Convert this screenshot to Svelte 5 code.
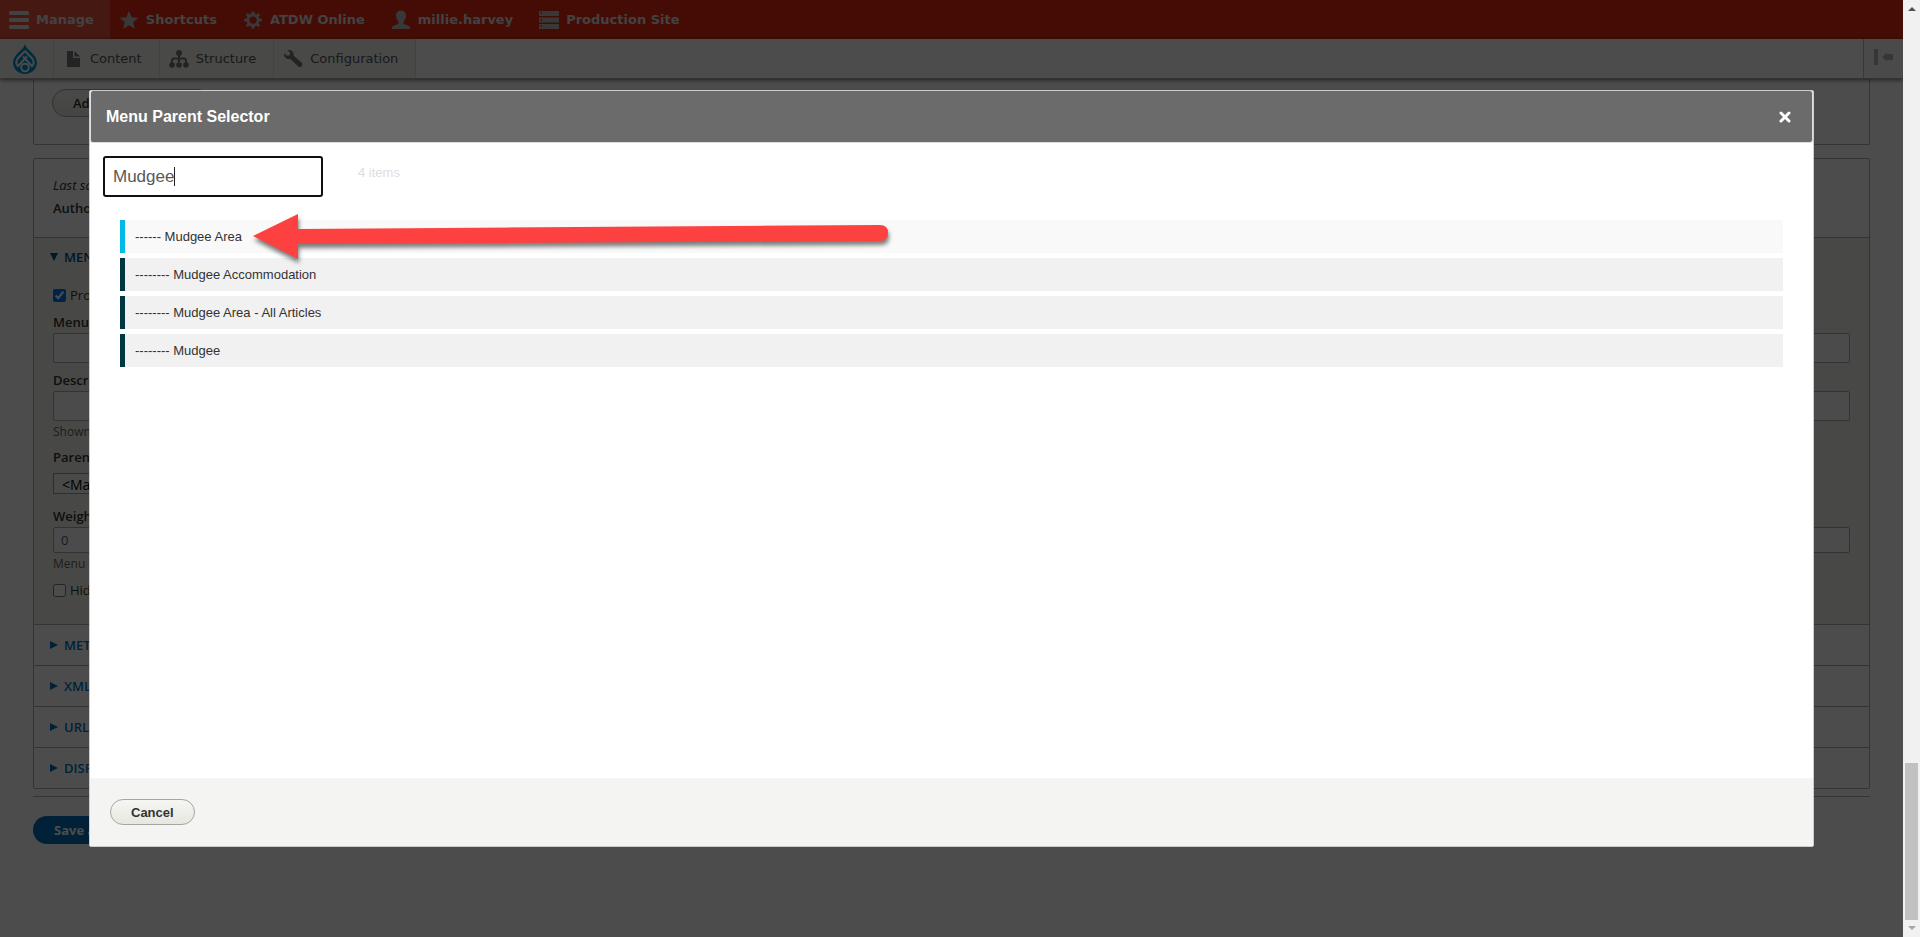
<script lang="ts">
  type Icon = 'menu' | 'star' | 'gear' | 'user' | 'server' | 'file' | 'tree' | 'wrench';

  const barItems: { label: string; icon: Icon }[] = [
    { label: 'Manage', icon: 'menu' },
    { label: 'Shortcuts', icon: 'star' },
    { label: 'ATDW Online', icon: 'gear' },
    { label: 'millie.harvey', icon: 'user' },
    { label: 'Production Site', icon: 'server' },
  ];

  const trayItems: { label: string; icon: Icon }[] = [
    { label: 'Content', icon: 'file' },
    { label: 'Structure', icon: 'tree' },
    { label: 'Configuration', icon: 'wrench' },
  ];

  const sections = ['META TAGS', 'XML SITEMAP', 'URL ALIAS', 'DISPLAY SETTINGS'];

  const parents = [
    { depth: 6, title: 'Mudgee Area' },
    { depth: 8, title: 'Mudgee Accommodation' },
    { depth: 8, title: 'Mudgee Area - All Articles' },
    { depth: 8, title: 'Mudgee' },
  ];

  let search = $state('Mudgee');
  let selected = $state(0);
  let provideLink = $state(true);

  const matches = $derived(
    parents.filter((p) => p.title.toLowerCase().includes(search.toLowerCase()))
  );
</script>

{#snippet icon(name: Icon)}
  <svg class="icon" viewBox="0 0 20 20" width="20" height="20" aria-hidden="true">
    {#if name === 'menu'}
      <rect x="0" y="1" width="20" height="4" rx="1.5" />
      <rect x="0" y="8" width="20" height="4" rx="1.5" />
      <rect x="0" y="15" width="20" height="4" rx="1.5" />
    {:else if name === 'star'}
      <path d="M10 .8l2.600 6.500 6.900.4-5.300 4.500 1.700 6.800L10 15.300 4.100 19l1.700-6.800L.5 7.700l6.900-.4z" />
    {:else if name === 'gear'}
      <path
        fill-rule="evenodd"
        d="M8.700 1.500h2.600l.4 2.300 1.700.7 2-1.400 1.700 1.700-1.400 2 .7 1.700 2.600.4v2.400l-2.600.4-.7 1.700 1.400 2-1.700 1.700-2-1.400-1.700.7-.4 2.300H8.700l-.4-2.300-1.700-.7-2 1.400-1.700-1.700 1.400-2-.7-1.700L1 11.300V8.900l2.600-.4.7-1.700-1.400-2 1.700-1.700 2 1.400 1.700-.7zM10 6.400a3.700 3.700 0 1 0 0 7.400 3.700 3.700 0 0 0 0-7.400z"
      />
    {:else if name === 'user'}
      <path d="M10 .5c3 0 5 2 5 5 0 2.300-.9 4.500-2.300 5.800v2.200c.3 1.400 6.300 1.700 6.300 4.300V19H1v-1.200c0-2.600 6-2.900 6.300-4.300v-2.200C5.900 10 5 7.800 5 5.500c0-3 2-5 5-5z" />
    {:else if name === 'server'}
      <path
        fill-rule="evenodd"
        d="M0 1h20v5H0zM0 7.500h20v5H0zM0 14h20v5H0zM1.500 2v1.500H3V2zM1.500 9.500V11H3V9.500zM1.500 15v1.500H3V15z"
      />
    {:else if name === 'file'}
      <path d="M4 2h6v7h7v9H4zM11.500 2L17 7.600h-5.500z" />
    {:else if name === 'tree'}
      <path d="M10 5v8M3 15v-3.500q0-2 2-2h10q2 0 2 2V15" fill="none" stroke="currentColor" stroke-width="2" />
      <circle cx="10" cy="4" r="3" />
      <circle cx="3" cy="16" r="2.800" />
      <circle cx="10" cy="16" r="2.800" />
      <circle cx="17" cy="16" r="2.800" />
    {:else if name === 'wrench'}
      <path d="M4.500 1.200C8 .2 11.300 3 10.600 6.500l8 7.300c2.200 2.300-1 5.500-3.300 3.600L7.300 9.900C4 10.800.6 8 1 4.300l3 2.500 2.600-.6.500-2.500z" />
    {/if}
  </svg>
{/snippet}

<div class="screen">
  <div class="page">
    <nav class="bar" aria-label="Administration toolbar">
      {#each barItems as item, i}
        <a href="#{item.icon}" class="bar-item" class:active={i === 0}>
          <span class="icon-box">{@render icon(item.icon)}</span>{item.label}
        </a>
      {/each}
    </nav>

    <nav class="tray" aria-label="Administration menu">
      <a href="#home" class="home" aria-label="Home">
        <svg viewBox="0 0 24 30" width="24" height="30" aria-hidden="true">
          <path d="M12 0c1 3.500 3.500 5.500 6 8 3.500 3.500 6 6.500 6 10.500C24 25 18.500 30 12 30S0 25 0 18.500C0 14.500 2.500 11.500 6 8c2.500-2.500 5-4.500 6-8z" fill="#0092d4" />
          <path
            d="M12 7L4.800 14.500Q1.800 19 5 22L14 12.500M10 12.500l9 9.500q3.200-3 .2-7.500L12 7"
            fill="none"
            stroke="#f5f5f2"
            stroke-width="2"
          />
          <circle cx="12" cy="23.500" r="3.800" fill="none" stroke="#f5f5f2" stroke-width="2" />
        </svg>
      </a>
      {#each trayItems as item}
        <a href="#{item.icon}" class="tray-item">
          <span class="icon-box">{@render icon(item.icon)}</span>{item.label}
        </a>
      {/each}
      <button class="orient" aria-label="Vertical orientation">
        <svg viewBox="0 0 20 16" width="20" height="16" aria-hidden="true">
          <path d="M0 0h4v16H0zM8 8l5-4.500V5h6v6h-6v1.500z" fill="#b5b5b5" />
        </svg>
      </button>
    </nav>

    <main class="content">
      <section class="panel panel-top">
        <button class="btn">Add</button>
      </section>

      <section class="panel">
        <div class="meta">
          <p><em>Last saved:</em> 05/20/2021</p>
          <p><b>Author:</b> millie.harvey</p>
        </div>

        <details class="settings" open>
          <summary>MENU SETTINGS</summary>
          <div class="fields">
            <label class="check"><input type="checkbox" bind:checked={provideLink} />Provide a menu link</label>
            <div class="field">
              <label for="link-title">Menu link title</label>
              <input id="link-title" type="text" />
            </div>
            <div class="field">
              <label for="link-desc">Description</label>
              <input id="link-desc" type="text" />
              <small>Shown when hovering over the menu link.</small>
            </div>
            <div class="field">
              <label for="link-parent">Parent item</label>
              <select id="link-parent"><option>&lt;Main navigation&gt;</option></select>
            </div>
            <div class="field field-weight">
              <label for="link-weight">Weight</label>
              <input id="link-weight" class="short" type="text" value="0" />
              <small>Menu links with lower weights are displayed first.</small>
            </div>
            <label class="check"><input type="checkbox" />Hide this link</label>
          </div>
        </details>

        {#each sections as title}
          <details class="section">
            <summary>{title}</summary>
          </details>
        {/each}
      </section>

      <div class="actions">
        <button class="save">Save and publish</button>
      </div>
    </main>

    <div class="overlay"></div>

    <div class="dialog" role="dialog" aria-modal="true" aria-labelledby="dialog-title">
      <header class="dialog-head">
        <h2 id="dialog-title">Menu Parent Selector</h2>
        <button class="close" aria-label="Close">
          <svg viewBox="0 0 12 12" width="12" height="12" aria-hidden="true">
            <path d="M2 2l8 8M10 2l-8 8" stroke="#fff" stroke-width="3" stroke-linecap="round" />
          </svg>
        </button>
      </header>

      <div class="dialog-body">
        <div class="filter">
          <div class="search">
            <input type="text" aria-label="Filter menu items" bind:value={search} />
            <span class="caret"></span>
          </div>
          <span class="count">{matches.length} items</span>
        </div>
        <ul class="parents">
          {#each matches as parent, i}
            <li>
              <button class="parent" class:selected={i === selected} onclick={() => (selected = i)}>
                {'-'.repeat(parent.depth)} {parent.title}
              </button>
            </li>
          {/each}
        </ul>
      </div>

      <footer class="dialog-foot">
        <button class="btn">Cancel</button>
      </footer>

      <!-- Pointer to the chosen parent -->
      <svg class="arrow" viewBox="0 0 644 56" width="644" height="56" aria-hidden="true">
        <path d="M3 24L48 2v15L630 13q8 0 8 8t-8 8L48 32v15z" fill="#fd4141" />
      </svg>
    </div>
  </div>

  <div class="scrollbar" aria-hidden="true">
    <svg viewBox="0 0 8 4" width="8" height="4"><path d="M0 4l4-4 4 4z" fill="#505050" /></svg>
    <div class="track"><div class="thumb"></div></div>
    <svg viewBox="0 0 8 4" width="8" height="4"><path d="M0 0l4 4 4-4z" fill="#a3a3a3" /></svg>
  </div>
</div>

<style>
  :global(body) {
    background: #fff;
  }

  .screen {
    display: flex;
    height: 100vh;
    overflow: hidden;
    font-family: "Open Sans", "Noto Sans", sans-serif;
    font-size: 13px;
    color: #333;
  }
  .screen :is(button, input, select) {
    font-family: inherit;
    box-sizing: border-box;
    margin: 0;
  }
  .page {
    position: relative;
    flex: 1;
    min-width: 0;
    overflow: hidden;
  }
  a {
    color: inherit;
    text-decoration: none;
  }

  /* Toolbar */
  .bar,
  .tray {
    display: flex;
    font-family: "DejaVu Sans", Verdana, sans-serif;
    font-size: 13px;
  }
  .bar {
    height: 39px;
    background: #e52a10;
    color: #ddd;
    font-weight: bold;
  }
  .bar .icon {
    fill: #bbb;
  }
  .bar .active .icon {
    fill: #ddd;
  }
  .bar-item,
  .tray-item {
    display: flex;
    align-items: center;
    padding-right: 17px;
  }
  .bar-item.active {
    padding-right: 16px;
    background: #e8523c;
  }
  .icon-box {
    width: 27px;
    padding-left: 9px;
  }
  .icon {
    display: block;
    fill: currentColor;
  }
  .tray {
    position: relative;
    height: 39px;
    border-bottom: 1px solid #aaa;
    background: #fff;
    box-shadow: 0 1px 4px rgba(0, 0, 0, 0.6);
    color: #565656;
  }
  .tray .icon {
    fill: #777;
    color: #777;
  }
  .tray-item,
  .home {
    border-right: 1px solid #ddd;
    background: #f5f5f2;
  }
  .home {
    display: flex;
    align-items: center;
    justify-content: center;
    width: 54px;
    padding-right: 4px;
    box-sizing: border-box;
  }
  .orient {
    width: 40px;
    padding: 0;
    border: 0;
    border-left: 1px solid #bbb;
    background: #f8f8f8;
  }
  .screen .orient {
    margin-left: auto;
  }

  /* Form behind the dialog */
  .content {
    padding: 0 33px;
  }
  .panel {
    margin-bottom: 7px;
    border: 1px solid #b0b0b0;
    border-radius: 2px;
  }
  .panel-top {
    height: 55px;
    margin-bottom: 13px;
    padding: 10px 18px 0;
    border-top: 0;
  }
  .btn {
    height: 26px;
    padding: 0 20px;
    border: 1px solid #a6a6a6;
    border-radius: 20px;
    background: linear-gradient(#f6f6f3, #e7e7df);
    color: #333;
    font-size: 13px;
    font-weight: 600;
  }
  .panel-top .btn {
    width: 160px;
    height: 28px;
    text-align: left;
  }
  .meta {
    padding: 15px 19px 17px;
    line-height: 23px;
  }
  .meta p {
    margin: 0;
  }
  .meta b {
    font-weight: 600;
  }
  .settings {
    border-top: 1px solid #aaa;
    background: #f2f2ea;
  }
  summary {
    display: flex;
    align-items: center;
    gap: 6px;
    height: 40px;
    padding-left: 16px;
    color: #0074bd;
    font-weight: 600;
    list-style: none;
  }
  summary::before {
    content: "";
    border: 4px solid transparent;
    border-left: 8px solid #0074bd;
    border-right: 0;
  }
  .settings > summary {
    height: 38px;
    color: #004f80;
  }
  .settings > summary::before {
    border: 4px solid transparent;
    border-top: 8px solid #004f80;
    border-bottom: 0;
  }
  .section {
    border-top: 1px solid #b0b0b0;
  }
  .fields {
    display: flex;
    flex-direction: column;
    gap: 8px;
    padding: 9px 19px 24px;
  }
  .check {
    display: flex;
    align-items: center;
    gap: 4px;
    height: 20px;
  }
  .check input {
    width: 13px;
    height: 13px;
  }
  .field {
    display: flex;
    flex-direction: column;
    align-items: flex-start;
    gap: 2px;
  }
  .field label {
    font-weight: 600;
    line-height: 18px;
  }
  .field input {
    width: 100%;
    height: 30px;
    padding: 0 7px;
    border: 1px solid #aaa;
    border-radius: 2px;
    background: #fcfcfa;
    color: #595959;
    font-size: 13px;
  }
  .field .short {
    height: 26px;
  }
  .field small {
    color: #666;
    font-size: 12px;
    line-height: 17px;
  }
  .field select {
    height: 21px;
    margin-top: 5px;
    padding-left: 4px;
    border: 1px solid #999;
    background: #f8f8f8;
    font-size: 14px;
  }
  .field-weight {
    margin-top: 5px;
  }
  .actions {
    padding-top: 19px;
    border-top: 1px solid #b0b0b0;
  }
  .save {
    height: 28px;
    padding: 0 21px;
    border: 0;
    border-radius: 20px;
    background: #0071b8;
    color: #fff;
    font-size: 13px;
    font-weight: bold;
  }

  /* Dialog */
  .overlay {
    position: absolute;
    inset: 0;
    background: rgba(0, 0, 0, 0.7);
  }
  .dialog {
    position: absolute;
    inset: 90px 89px;
    display: flex;
    flex-direction: column;
    box-sizing: border-box;
    border: 1px solid #ccc;
    border-radius: 2px;
    background: #fff;
    font-family: "Liberation Sans", Arial, sans-serif;
  }
  .dialog-head {
    display: flex;
    align-items: center;
    justify-content: space-between;
    height: 51px;
    padding: 0 21px 0 15px;
    border: 1px solid #ddd;
    border-top: 0;
    border-radius: 3px;
    background: #6b6b6b;
  }
  .dialog-head h2 {
    margin: 0;
    padding-top: 1px;
    color: #fff;
    font-size: 16px;
  }
  .close {
    display: flex;
    padding: 0;
    border: 0;
    background: none;
  }
  .dialog-body {
    flex: 1;
    padding: 13px;
  }
  .filter {
    display: flex;
    align-items: flex-start;
    gap: 35px;
  }
  .search {
    position: relative;
  }
  .search input {
    width: 220px;
    height: 41px;
    padding: 0 8px;
    border: 2px solid #101010;
    border-radius: 3px;
    outline: 0;
    color: #595959;
    font-size: 17px;
  }
  .caret {
    position: absolute;
    top: 11px;
    left: 71px;
    width: 1px;
    height: 19px;
    background: #222;
  }
  .count {
    color: #ddd;
    line-height: 33px;
  }
  .parents {
    display: flex;
    flex-direction: column;
    gap: 5px;
    margin: 0;
    padding: 23px 17px 0;
    list-style: none;
  }
  .parent {
    display: block;
    width: 100%;
    height: 33px;
    padding: 0 10px 1px;
    border: 0;
    border-left: 5px solid #003842;
    background: #f1f1f1;
    color: #333;
    font-size: 13px;
    text-align: left;
  }
  .parent.selected {
    border-color: #00b9e8;
    background: #f9f9f9;
  }
  .dialog-foot {
    padding: 21px 20px;
    background: #f4f4f2;
  }
  .dialog-foot .btn {
    display: block;
    font-weight: bold;
  }
  .arrow {
    position: absolute;
    top: 121px;
    left: 160px;
    filter: drop-shadow(1px 4px 2px rgba(0, 0, 0, 0.5));
  }

  /* Window scrollbar */
  .scrollbar {
    display: flex;
    flex-direction: column;
    align-items: center;
    gap: 6px;
    width: 17px;
    padding: 7px 0;
    box-sizing: border-box;
    background: #f1f1f1;
  }
  .track {
    display: flex;
    flex: 1;
    flex-direction: column;
    justify-content: flex-end;
  }
  .thumb {
    width: 13px;
    height: 157px;
    background: #c1c1c1;
  }
</style>
